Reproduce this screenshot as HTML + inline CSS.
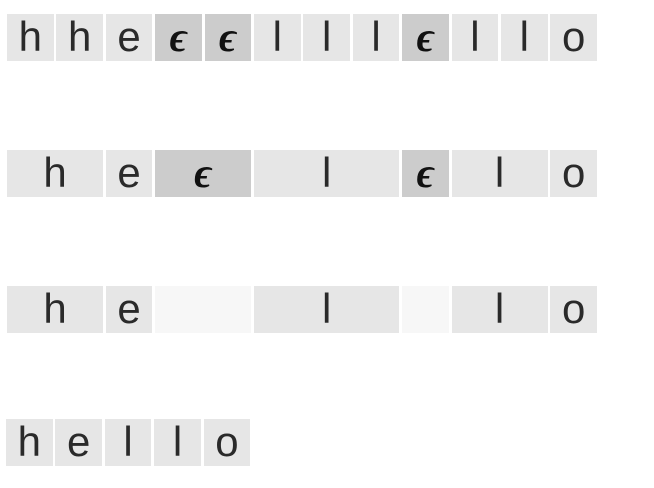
<!DOCTYPE html>
<html><head><meta charset="utf-8"><style>
body{margin:0;width:654px;height:488px;background:#fff;position:relative;overflow:hidden;font-family:"Liberation Sans",sans-serif;}
.c{position:absolute;height:47px;background:#e6e6e6;display:flex;align-items:center;justify-content:center;font-size:42px;color:#2a2a2a;font-weight:normal;line-height:1;}
.c span{position:relative;top:-1px;}
.d{background:#cccccc;}
.w{background:#f7f7f7;}
.e{font-family:"Liberation Serif",serif;font-style:italic;font-weight:bold;font-size:42px;color:#111;}
.e span{top:0px;}
.r1{top:14px}.r2{top:150px}.r3{top:286px}.r4{top:419px}
</style></head><body>
<div class="c r1" style="left:7px;width:46.6px"><span>h</span></div>
<div class="c r1" style="left:56.4px;width:46.6px"><span>h</span></div>
<div class="c r1" style="left:105.8px;width:46.6px"><span>e</span></div>
<div class="c r1 d e" style="left:155.2px;width:46.6px"><span>ϵ</span></div>
<div class="c r1 d e" style="left:204.6px;width:46.6px"><span>ϵ</span></div>
<div class="c r1" style="left:254px;width:46.6px"><span>l</span></div>
<div class="c r1" style="left:303.4px;width:46.6px"><span>l</span></div>
<div class="c r1" style="left:352.8px;width:46.6px"><span>l</span></div>
<div class="c r1 d e" style="left:402.2px;width:46.6px"><span>ϵ</span></div>
<div class="c r1" style="left:451.6px;width:46.6px"><span>l</span></div>
<div class="c r1" style="left:501px;width:46.6px"><span>l</span></div>
<div class="c r1" style="left:550.4px;width:46.6px"><span>o</span></div>
<div class="c r2" style="left:7px;width:96px"><span>h</span></div>
<div class="c r2" style="left:105.8px;width:46.6px"><span>e</span></div>
<div class="c r2 d e" style="left:155.2px;width:96px"><span>ϵ</span></div>
<div class="c r2" style="left:254px;width:145.4px"><span>l</span></div>
<div class="c r2 d e" style="left:402.2px;width:46.6px"><span>ϵ</span></div>
<div class="c r2" style="left:451.6px;width:96px"><span>l</span></div>
<div class="c r2" style="left:550.4px;width:46.6px"><span>o</span></div>
<div class="c r3" style="left:7px;width:96px"><span>h</span></div>
<div class="c r3" style="left:105.8px;width:46.6px"><span>e</span></div>
<div class="c r3 w" style="left:155.2px;width:96px"></div>
<div class="c r3" style="left:254px;width:145.4px"><span>l</span></div>
<div class="c r3 w" style="left:402.2px;width:46.6px"></div>
<div class="c r3" style="left:451.6px;width:96px"><span>l</span></div>
<div class="c r3" style="left:550.4px;width:46.6px"><span>o</span></div>
<div class="c r4" style="left:6px;width:46.6px"><span>h</span></div>
<div class="c r4" style="left:55.4px;width:46.6px"><span>e</span></div>
<div class="c r4" style="left:104.8px;width:46.6px"><span>l</span></div>
<div class="c r4" style="left:154.2px;width:46.6px"><span>l</span></div>
<div class="c r4" style="left:203.6px;width:46.6px"><span>o</span></div>
</body></html>
